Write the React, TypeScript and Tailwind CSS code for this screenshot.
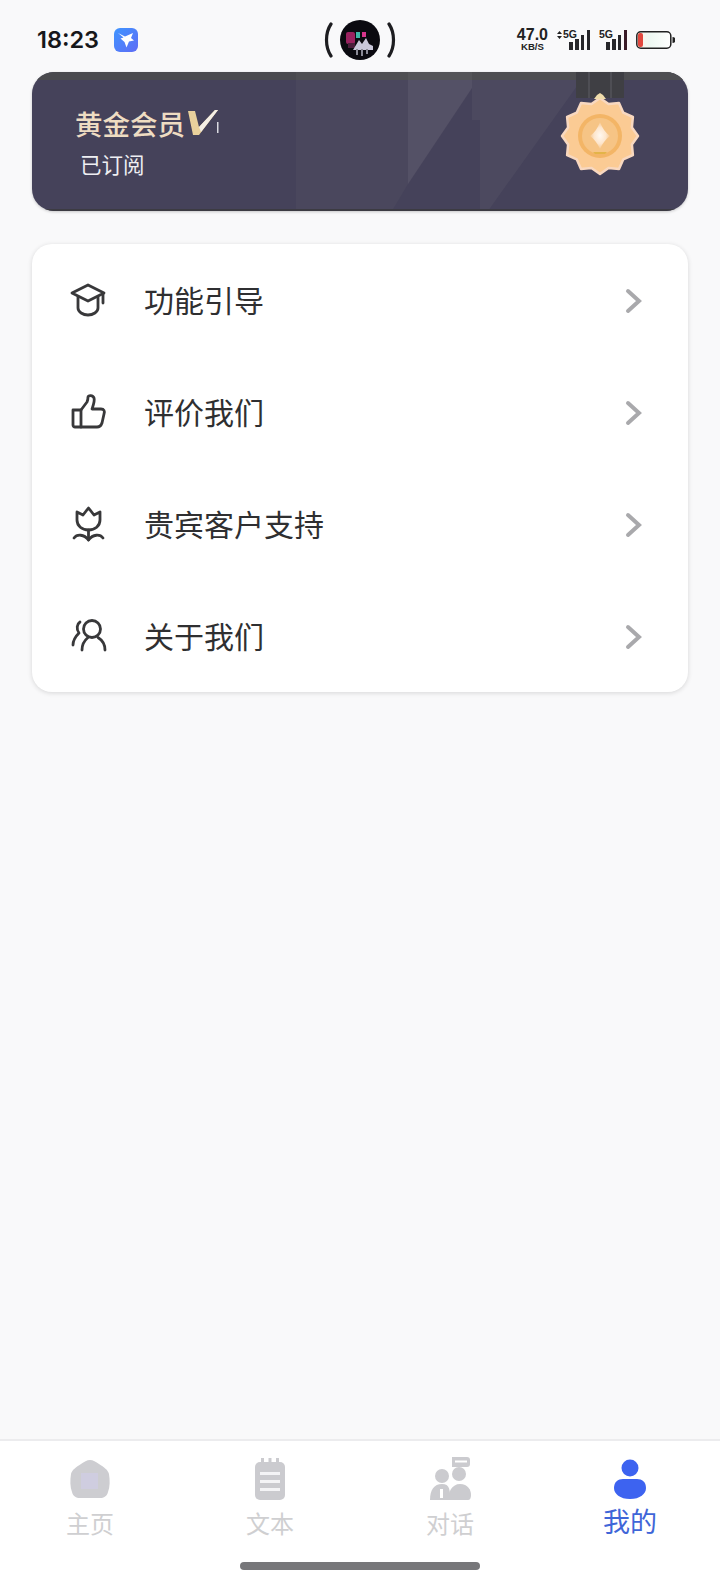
const CJK = "font-['Noto_Sans_CJK_SC','Noto_Sans',sans-serif]";

function Bird() {
  return (
    <svg width="24" height="24" viewBox="0 0 24 24">
      <defs>
        <linearGradient id="bd" x1="0" y1="0" x2="1" y2="1">
          <stop offset="0" stopColor="#3f95ff" />
          <stop offset="1" stopColor="#5f6cf5" />
        </linearGradient>
      </defs>
      <rect width="24" height="24" rx="6" fill="url(#bd)" />
      <path d="M4 5l7 3.500L19 5l-2 5 3 2.500-5 1-2.500 6-2-5.500-4-3.500 3-1z" fill="#fff" />
    </svg>
  );
}

function Cap() {
  return (
    <svg width="38" height="38" viewBox="0 0 38 38" fill="none" stroke="#38383a" strokeWidth="2.800" strokeLinejoin="round" strokeLinecap="round">
      <path d="M19 4L3 12l16 8 16-8z" />
      <path d="M9 16v11c0 4 5 7 10 7s10-3 10-7V16" />
      <path d="M34 13v9" />
    </svg>
  );
}

function Thumb() {
  return (
    <svg width="38" height="38" viewBox="0 0 38 38" fill="none" stroke="#38383a" strokeWidth="2.800" strokeLinejoin="round" strokeLinecap="round">
      <path d="M4 17h8v17H6a2 2 0 0 1-2-2z" />
      <path d="M12 17l6-8c1-2 1-4 1-5 0-2 5-2 6 1 1 3-1 8-2 11h9c3 0 4 2 3 5l-2 9c-1 3-2 4-5 4H12" />
    </svg>
  );
}

function Tulip() {
  return (
    <svg width="38" height="38" viewBox="0 0 38 38" fill="none" stroke="#38383a" strokeWidth="2.800" strokeLinejoin="round" strokeLinecap="round">
      <path d="M8 7l6 3 5.500-7L25 10l6-3v8c0 6-5 10-11.500 10S8 21 8 15z" />
      <path d="M19.500 25v10" />
      <path d="M5 33c3-4 10-4 14.500 2 4.500-6 11.500-6 14.500-2" />
    </svg>
  );
}

function People() {
  return (
    <svg width="38" height="38" viewBox="0 0 38 38" fill="none" stroke="#38383a" strokeWidth="2.800" strokeLinejoin="round" strokeLinecap="round">
      <circle cx="23" cy="12" r="8.500" />
      <path d="M13 33c0-6 3-10 6-12.500M36 33c0-6-3-10-7-12.500" />
      <path d="M11 5c-3 2-4 7-1 11-3 3-6 8-6 12" />
    </svg>
  );
}

function Chevron() {
  return (
    <svg width="18" height="26" viewBox="0 0 18 26" fill="none" stroke="#a9a9ac" strokeWidth="4" strokeLinecap="round" strokeLinejoin="miter" className="mt-[2px]">
      <path d="M3 3l11 10L3 23" />
    </svg>
  );
}

function Medal() {
  const cx = 40;
  const cy = 41;
  const n = 12;
  const pts: string[] = [];
  for (let i = 0; i < n * 2; i++) {
    const a = (i / (n * 2)) * Math.PI * 2 - Math.PI / 2;
    const r = i % 2 === 0 ? 38 : 33;
    pts.push(`${(cx + r * Math.cos(a)).toFixed(1)},${(cy + r * Math.sin(a)).toFixed(1)}`);
  }
  return (
    <svg width="80" height="104" viewBox="0 0 80 104" className="absolute top-0 right-[48px]">
      <defs>
        <radialGradient id="md">
          <stop offset="0" stopColor="#fff8f0" />
          <stop offset="0.6" stopColor="#fde6cd" />
          <stop offset="1" stopColor="#f7c88f" />
        </radialGradient>
      </defs>
      <rect x="16" y="0" width="48" height="26" fill="#3f3f44" />
      <rect x="28" y="0" width="2" height="26" fill="#4e4e54" />
      <rect x="50" y="0" width="2" height="26" fill="#4e4e54" />
      <g transform="translate(0,23)">
        <polygon points={pts.join(" ")} fill="#fbcb94" stroke="#f8d8c0" strokeWidth="2.500" strokeLinejoin="round" />
        <circle cx="40" cy="41" r="22" fill="#f3b566" />
        <circle cx="40" cy="41" r="18" fill="#f6c485" />
        <path d="M40 27c2 6 6 11 10 14-4 3-8 8-10 13-2-5-6-10-10-13 4-3 8-8 10-14z" fill="url(#md)" />
        <path d="M34 4l3-4 3-2 3 2 3 4z" fill="#efdcab" />
        <path d="M33 57h14l-2 2H35z" fill="#e3b448" />
      </g>
    </svg>
  );
}

function Decor() {
  return (
    <svg viewBox="0 0 656 139" preserveAspectRatio="none" className="absolute inset-0 w-full h-full">
      <polygon points="264,0 376,0 376,112 360,139 264,139" fill="#4a475d" />
      <polygon points="376,0 440,0 440,16 376,112" fill="#545166" />
      <polygon points="440,0 555,0 456,139 448,139 448,48 440,48" fill="#4c495f" />
      <rect x="0" y="0" width="656" height="8" fill="#4a4a4e" />
      <rect x="264" y="0" width="112" height="8" fill="#4f4f52" />
      <rect x="376" y="0" width="64" height="8" fill="#555558" />
      <rect x="440" y="0" width="216" height="8" fill="#4e4e51" />
      <rect x="0" y="137" width="656" height="2" fill="#3c3b42" />
    </svg>
  );
}

function Bars({ last }: { last?: string }) {
  return (
    <svg width="21" height="20" viewBox="0 0 21 20" fill="#26262a">
      <rect x="0" y="12" width="4" height="8" />
      <rect x="6" y="9" width="4" height="11" />
      <rect x="12" y="5" width="3" height="15" />
      <rect x="18" y="0" width="3" height="20" fill={last ?? "#26262a"} />
    </svg>
  );
}

function Row({ icon, label }: { icon: React.ReactNode; label: string }) {
  return (
    <div className="h-[112px] flex items-center pl-[37px] pr-[45px]">
      <div className="w-[38px] h-[38px] shrink-0">{icon}</div>
      <div className={`ml-[37px] flex-1 text-[30px] leading-none pb-[2px] text-[#2f2f31] ${CJK}`}>{label}</div>
      <Chevron />
    </div>
  );
}

function Tab({ icon, label, active }: { icon: React.ReactNode; label: string; active?: boolean }) {
  return (
    <div className="w-[180px] flex flex-col items-center">
      <div className="h-[46px] flex items-center justify-center">{icon}</div>
      <div className={`mt-[6px] leading-[30px] ${CJK} ${active ? "text-[27px] text-[#3f66d8] -translate-y-[2px]" : "text-[24px] text-[#cfcfd1]"}`}>{label}</div>
    </div>
  );
}

export default function App() {
  return (
    <div className="w-[720px] h-[1584px] bg-[#f9f9fa] flex flex-col font-['Inter',sans-serif] overflow-hidden">
      {/* status bar */}
      <div className="h-[72px] shrink-0 grid grid-cols-[1fr_auto_1fr] items-center pt-[8px] px-[41px]">
        <div className="flex items-center -ml-[4px]">
          <div className="text-[23.500px] font-semibold text-[#17171a] leading-none">18:23</div>
          <div className="ml-[15px]"><Bird /></div>
        </div>
        <div className="flex items-center gap-[3px]">
          <svg width="9" height="36" viewBox="0 0 9 36" fill="none" stroke="#1d1d20" strokeWidth="3.200" strokeLinecap="round"><path d="M7 2C1 11 1 25 7 34" /></svg>
          <svg width="40" height="40" viewBox="0 0 40 40" className="mx-[4px]">
            <circle cx="20" cy="20" r="20" fill="#0b0a10" />
            <rect x="6" y="12" width="9" height="12" rx="2" fill="#9a2260" />
            <rect x="8" y="23" width="7" height="5" fill="#4b1d3c" />
            <rect x="16" y="12" width="4" height="6" fill="#3fb6a8" />
            <rect x="22" y="12" width="4" height="5" fill="#d8358c" />
            <path d="M13 30l6-10 3 4 4-6 3 6 4 2v4z" fill="#c9c7da" />
            <rect x="16" y="29" width="2" height="6" fill="#8a8a96" />
            <rect x="21" y="29" width="2" height="7" fill="#8a8a96" />
            <rect x="26" y="29" width="2" height="5" fill="#8a8a96" />
          </svg>
          <svg width="9" height="36" viewBox="0 0 9 36" fill="none" stroke="#1d1d20" strokeWidth="3.200" strokeLinecap="round"><path d="M2 2C8 11 8 25 2 34" /></svg>
        </div>
        <div className="flex items-center justify-end gap-[9px] mr-[4px] text-[#222] font-['Liberation_Sans',sans-serif] font-bold">
          <div className="flex flex-col items-center">
            <span className="text-[16px] leading-[12px]">47.0</span>
            <span className="text-[9.600px] leading-[9px] mt-[1px]">KB/S</span>
          </div>
          <div className="relative w-[33px] h-[20px] flex justify-end">
            <Bars />
            <div className="absolute left-0 top-0 flex items-center gap-[1px]">
              <svg width="5" height="8" viewBox="0 0 5 8" fill="#222"><path d="M2.500 0L5 3H0zM2.500 8L0 5h5z" /></svg>
              <span className="text-[10.500px] leading-[9px]">5G</span>
            </div>
          </div>
          <div className="relative w-[28px] h-[20px] flex justify-end">
            <Bars last="#3a1c28" />
            <span className="absolute left-0 top-0 text-[10.500px] leading-[9px]">5G</span>
          </div>
          <svg width="39" height="18" viewBox="0 0 39 18">
            <defs>
              <linearGradient id="bt" x1="0" x2="1" y1="0" y2="0">
                <stop offset="0" stopColor="#fff3e8" />
                <stop offset="0.4" stopColor="#eef8f2" />
                <stop offset="1" stopColor="#ffffff" />
              </linearGradient>
            </defs>
            <rect x="0.800" y="0.800" width="34" height="16.400" rx="4" fill="url(#bt)" stroke="#222" strokeWidth="1.500" />
            <rect x="2" y="2" width="5" height="14" rx="2" fill="#e2483e" />
            <path d="M36.500 6a3 3 0 0 1 0 6z" fill="#222" />
          </svg>
        </div>
      </div>

      {/* banner */}
      <div className="mx-[32px] h-[139px] shrink-0 rounded-[22px] bg-[#45425a] relative overflow-hidden shadow-[0_1px_3px_rgba(0,0,0,0.2)]">
        <Decor />
        <Medal />
        <div className="relative pl-[43px] pt-[35px] flex flex-col items-start">
          <div className="flex items-center">
            <span className={`text-[27.500px] leading-[32px] font-medium text-[#eedcc2] ${CJK}`}>黄金会员</span>
            <svg width="34" height="30" viewBox="0 0 34 30" className="ml-[2px]">
              <path d="M1 3h7l4 16L28 2h3L12 27H6z" fill="#e9d19c" />
              <path d="M12 19L28 2h3L14 24z" fill="#f4efe6" />
              <rect x="30" y="14" width="1.500" height="11" fill="#d9d9e0" />
            </svg>
          </div>
          <div className={`mt-[12px] ml-[5px] text-[21.500px] leading-[26px] text-[#eeeef2] ${CJK}`}>已订阅</div>
        </div>
      </div>

      {/* menu */}
      <div className="mx-[32px] mt-[33px] bg-white rounded-[20px] shrink-0 h-[448px] shadow-[0_1px_5px_rgba(0,0,0,0.14)]">
        <Row icon={<Cap />} label="功能引导" />
        <Row icon={<Thumb />} label="评价我们" />
        <Row icon={<Tulip />} label="贵宾客户支持" />
        <Row icon={<People />} label="关于我们" />
      </div>

      <div className="flex-1" />

      {/* tabs */}
      <div className="h-[145px] shrink-0 bg-white border-t-2 border-[#ececee] relative">
        <div className="flex pt-[15px]">
          <Tab
            label="主页"
            icon={
              <svg width="40" height="40" viewBox="0 0 40 40">
                <path d="M20 1c3 0 6 2 9 4 5 3 9 6 10 10 1 6 1 13-1 18-1 4-4 6-8 6H10c-4 0-7-2-8-6C0 28 0 21 1 15c1-4 5-7 10-10 3-2 6-4 9-4z" fill="#cdcdd1" />
                <rect x="11" y="14" width="17" height="16" fill="#cfcde0" />
              </svg>
            }
          />
          <Tab
            label="文本"
            icon={
              <svg width="30" height="44" viewBox="0 0 30 44">
                <rect x="0" y="5" width="30" height="38" rx="5" fill="#cbcbcf" />
                <rect x="6" y="1" width="3" height="6" fill="#cbcbcf" />
                <rect x="13.500" y="1" width="3" height="6" fill="#cbcbcf" />
                <rect x="21" y="1" width="3" height="6" fill="#cbcbcf" />
                <rect x="5" y="15" width="20" height="3" fill="#f4f4f6" />
                <rect x="5" y="23" width="20" height="3" fill="#f4f4f6" />
                <rect x="5" y="31" width="20" height="3" fill="#f4f4f6" />
              </svg>
            }
          />
          <Tab
            label="对话"
            icon={
              <svg width="42" height="46" viewBox="0 0 42 46" fill="#cbcbcf">
                <circle cx="13" cy="20" r="7" />
                <path d="M1 44c0-10 4-16 12-16s8 6 8 16z" />
                <rect x="11" y="33" width="3" height="9" fill="#fff" />
                <circle cx="30" cy="18" r="7" />
                <path d="M19 44c0-8 4-16 12-16s11 6 11 11c0 3-1 5-3 5z" />
                <path d="M23 1h15a3 3 0 0 1 3 3v4a3 3 0 0 1-3 3H29l-6 0z" />
                <rect x="26" y="4.500" width="12" height="2" fill="#fff" />
              </svg>
            }
          />
          <Tab
            active
            label="我的"
            icon={
              <svg width="32" height="40" viewBox="0 0 32 40" fill="#3d63f0">
                <circle cx="16" cy="9" r="8.500" />
                <path d="M0 29c0-6 4-9 9-9h14c5 0 9 3 9 9 0 6-6 11-16 11S0 35 0 29z" />
              </svg>
            }
          />
        </div>
        <div className="absolute left-[240px] top-[121px] w-[240px] h-[8px] rounded-full bg-[#77777a]" />
      </div>
    </div>
  );
}
